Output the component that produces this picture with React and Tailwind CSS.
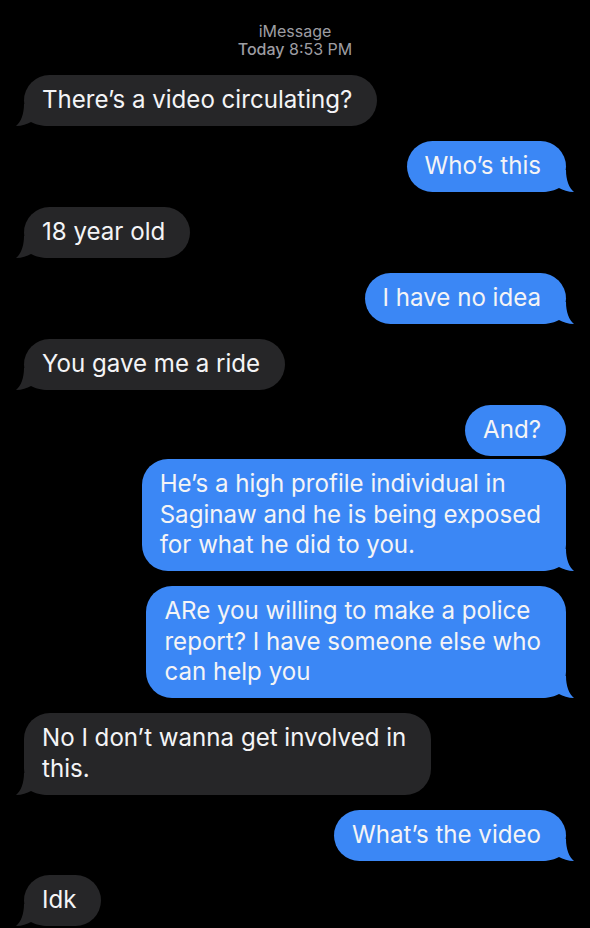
import React from "react";

function Tail({ side, color }) {
  const pos = side === "left" ? "left-[-8px]" : "right-[-8px] -scale-x-100";
  return (
    <svg
      className={`absolute bottom-0 ${pos}`}
      width="34"
      height="22"
      viewBox="0 0 34 22"
    >
      <path
        d="M8 0 C8 10 5 18 0 22 C6 22 11 20 15 18 C19 20 24 22 34 22 L34 0 Z"
        fill={color}
      />
    </svg>
  );
}

function Bubble({ me, tail = true, lines, mt = "mt-[15px]" }) {
  const color = me ? "#3b87f5" : "#262628";
  return (
    <div className={`flex ${me ? "justify-end" : "justify-start"} ${mt}`}>
      <div
        className={`relative rounded-[26px] pl-[18px] pr-[25px] py-[10.25px] text-[24.1px] leading-[30.5px] text-[#f4f4f6] whitespace-nowrap ${
          me ? "bg-[#3b87f5]" : "bg-[#262628]"
        }`}
      >
        {tail && <Tail side={me ? "right" : "left"} color={color} />}
        <div className="relative">
          {lines.map((l, i) => (
            <div key={i}>{l}</div>
          ))}
        </div>
      </div>
    </div>
  );
}

export default function App() {
  return (
    <div
      className="w-[590px] h-[928px] overflow-hidden bg-black px-[24px] pt-[22px]"
      style={{ fontFamily: "Inter, 'Noto Sans', sans-serif" }}
    >
      <div className="text-center text-[16px] leading-[18px] text-[#9d9da2]">
        <div>iMessage</div>
        <div>
          <span className="font-medium">Today</span> 8:53 PM
        </div>
      </div>
      <Bubble mt="mt-[17px]" lines={["There’s a video circulating?"]} />
      <Bubble me lines={["Who’s this"]} />
      <Bubble lines={["18 year old"]} />
      <Bubble me lines={["I have no idea"]} />
      <Bubble lines={["You gave me a ride"]} />
      <Bubble me tail={false} lines={["And?"]} />
      <Bubble
        me
        mt="mt-[3px]"
        lines={[
          "He’s a high profile individual in",
          "Saginaw and he is being exposed",
          "for what he did to you.",
        ]}
      />
      <Bubble
        me
        lines={[
          "ARe you willing to make a police",
          "report? I have someone else who",
          "can help you",
        ]}
      />
      <Bubble lines={["No I don’t wanna get involved in", "this."]} />
      <Bubble me lines={["What’s the video"]} />
      <Bubble lines={["Idk"]} mt="mt-[14px]" />
    </div>
  );
}
